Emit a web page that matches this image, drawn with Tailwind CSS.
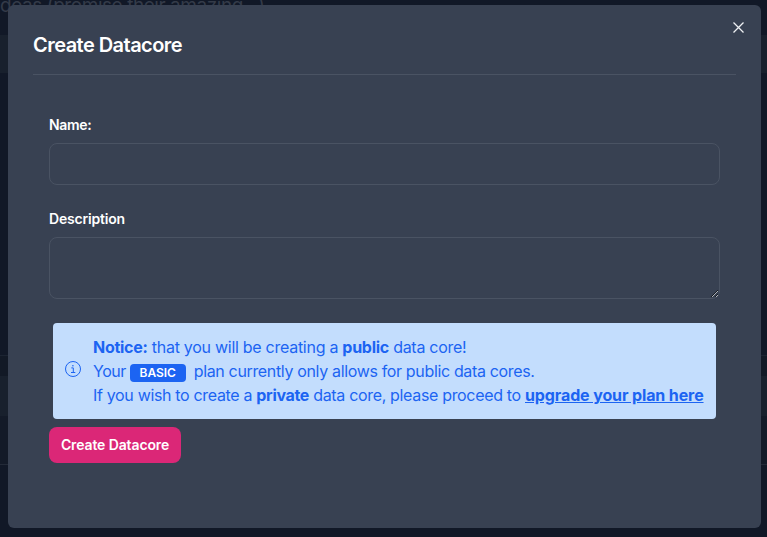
<!DOCTYPE html>
<html lang="en">
<head>
<meta charset="utf-8">
<title>Create Datacore</title>
<script src="https://cdn.jsdelivr.net/npm/@tailwindcss/browser@4"></script>
</head>
<body class="relative h-[537px] overflow-hidden bg-[#111827] font-['Inter',sans-serif]">
<div class="absolute inset-0 flex flex-col">
  <div class="-mt-1.5 mb-1.5 h-[35px] whitespace-nowrap text-[19px] leading-6 tracking-[-0.45px] text-[#343b49]">deas (promise their amazing...)</div>
  <div class="h-[38px] bg-[#18202d]"></div>
  <div class="h-[282px]"></div>
  <div class="h-[21px] border-t border-[#1c2432] bg-[#121926]"></div>
  <div class="h-10 bg-[#18202d]"></div>
  <div class="h-12 bg-[#131a28]"></div>
  <div class="h-px bg-[#232a38]"></div>
</div>
<main class="absolute left-2 top-[5px] flex h-[523px] w-[753px] flex-col rounded-md bg-[#384152] px-[25px] text-white">
  <header class="flex h-[70px] shrink-0 items-center border-b border-[#4a5363] pt-[10px]">
    <h1 class="text-[20px] font-semibold tracking-[-0.54px]">Create Datacore</h1>
  </header>
  <button aria-label="Close" class="absolute right-[17px] top-[17px]"><svg class="block" width="11" height="11" viewBox="0 0 11 11" fill="none" stroke="#eef0f3" stroke-width="1.3"><path d="M.5.5l10 10M10.500.5l-10 10"/></svg></button>
  <form class="flex flex-col items-start px-4 pt-10">
    <label class="h-5 text-[14px] font-semibold leading-5 tracking-[-0.3px]">Name:</label>
    <input class="mt-2 h-[42px] w-[671px] rounded-lg border border-[#4a5363]">
    <label class="mt-6 h-5 text-[14px] font-semibold leading-5 tracking-[-0.2px]">Description</label>
    <textarea class="mt-2 block h-[62px] w-[671px] resize-y rounded-lg border border-[#4a5363]"></textarea>
    <div class="ml-1 mt-6 flex h-24 w-[663px] items-center rounded bg-[#c3ddfd] pl-3 text-[#1c64f2]">
      <svg class="mb-1 mr-3 shrink-0" width="16" height="16" viewBox="0 0 16 16" fill="none" stroke="currentColor"><circle cx="8" cy="8" r="7.500"/><path d="M6.300 6.900h2v4.500M6 11.500h4.300"/><circle cx="7.900" cy="4.700" r=".8" fill="currentColor" stroke="none"/></svg>
      <div class="whitespace-nowrap text-[16px] leading-6">
        <div class="h-6"><span class="tracking-[-0.275px]"><b>Notice:</b> that you will be creating a <b>public</b> data core!</span></div>
        <div class="flex h-6 items-center"><span class="tracking-[-0.5px]">Your</span><span class="ml-1 mr-2 mt-[3px] flex h-[18px] w-14 items-center justify-center rounded bg-[#1c64f2] text-[12px] font-semibold text-white">BASIC</span><span class="tracking-[-0.345px]">plan currently only allows for public data cores.</span></div>
        <div class="h-6"><span class="tracking-[-0.33px]">If you wish to create a <b>private</b> data core, please proceed to <b class="tracking-[-0.12px] underline">upgrade your plan here</b></span></div>
      </div>
    </div>
    <button type="button" class="mt-2 h-9 w-[132px] rounded-lg bg-[#db2777] pb-0.5 text-[14px] font-semibold tracking-[-0.12px]">Create Datacore</button>
  </form>
</main>
</body>
</html>
